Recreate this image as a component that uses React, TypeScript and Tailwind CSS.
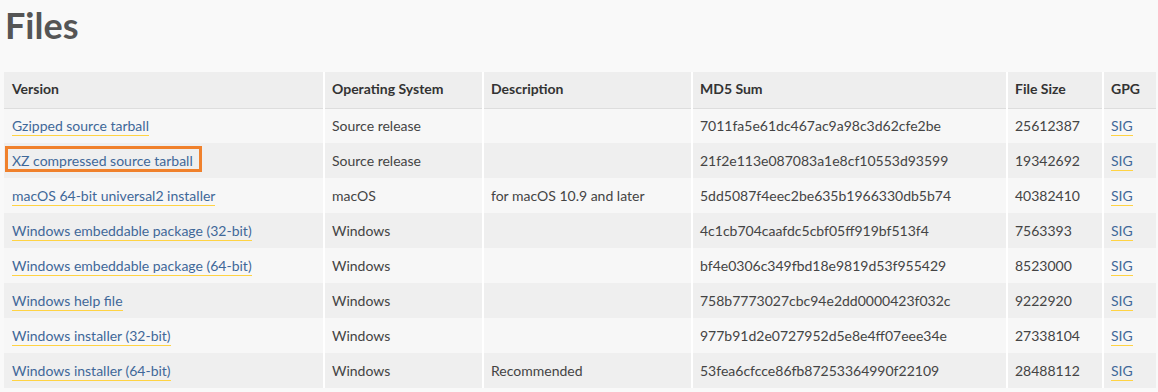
import React from "react";

type FileRow = {
  name: string;
  os: string;
  desc: string;
  md5: string;
  size: string;
  marked?: boolean;
};

const rows: FileRow[] = [
  { name: "Gzipped source tarball", os: "Source release", desc: "", md5: "7011fa5e61dc467ac9a98c3d62cfe2be", size: "25612387" },
  { name: "XZ compressed source tarball", os: "Source release", desc: "", md5: "21f2e113e087083a1e8cf10553d93599", size: "19342692", marked: true },
  { name: "macOS 64-bit universal2 installer", os: "macOS", desc: "for macOS 10.9 and later", md5: "5dd5087f4eec2be635b1966330db5b74", size: "40382410" },
  { name: "Windows embeddable package (32-bit)", os: "Windows", desc: "", md5: "4c1cb704caafdc5cbf05ff919bf513f4", size: "7563393" },
  { name: "Windows embeddable package (64-bit)", os: "Windows", desc: "", md5: "bf4e0306c349fbd18e9819d53f955429", size: "8523000" },
  { name: "Windows help file", os: "Windows", desc: "", md5: "758b7773027cbc94e2dd0000423f032c", size: "9222920" },
  { name: "Windows installer (32-bit)", os: "Windows", desc: "", md5: "977b91d2e0727952d5e8e4ff07eee34e", size: "27338104" },
  { name: "Windows installer (64-bit)", os: "Windows", desc: "Recommended", md5: "53fea6cfcce86fb87253364990f22109", size: "28488112" },
];

const headers = ["Version", "Operating System", "Description", "MD5 Sum", "File Size", "GPG"];

function Link({ children }: { children: React.ReactNode }) {
  return (
    <a className="inline-block leading-[18px] border-b border-[#ffd343] text-[#3f6899]">{children}</a>
  );
}

export default function App() {
  return (
    <div
      className="min-h-[392px] w-[1158px] bg-[#f9f9f9] text-[#444444]"
      style={{ fontFamily: "Lato, 'Open Sans', sans-serif" }}
    >
      <h1 className="pl-[5px] pt-[5px] text-[36px] font-bold leading-[40px] text-[#555555]">Files</h1>
      <div className="pl-[4px] pt-[27px]">
        <table className="w-[1152px] table-fixed border-collapse text-[14px]">
          <colgroup>
            <col className="w-[320px]" />
            <col className="w-[159px]" />
            <col className="w-[209px]" />
            <col className="w-[315px]" />
            <col className="w-[96px]" />
            <col className="w-[53px]" />
          </colgroup>
          <thead>
            <tr className="h-[36px] bg-[#eeeeee]">
              {headers.map((h, i) => (
                <th
                  key={h}
                  className={`border-b border-b-[#dddddd] pb-[2px] text-left font-bold text-[#333333] ${
                    i === 0 ? "pl-[8px]" : "border-l-2 border-l-white pl-[7px]"
                  }`}
                >
                  {h}
                </th>
              ))}
            </tr>
          </thead>
          <tbody>
            {rows.map((r, idx) => (
              <tr key={r.name} className={`h-[35px] ${idx % 2 === 0 ? "bg-[#f7f7f7]" : "bg-[#efefef]"}`}>
                <td className="pl-[8px]">
                  {r.marked ? (
                    <span className="relative inline-block">
                      <Link>{r.name}</Link>
                      <span className="absolute -left-[7px] -right-[9px] -top-[4px] -bottom-[1px] border-[3px] border-[#f0812c]" />
                    </span>
                  ) : (
                    <Link>{r.name}</Link>
                  )}
                </td>
                <td className="border-l-2 border-l-white pl-[7px]">{r.os}</td>
                <td className="border-l-2 border-l-white pl-[7px]">{r.desc}</td>
                <td className="border-l-2 border-l-white pl-[7px]">{r.md5}</td>
                <td className="border-l-2 border-l-white pl-[7px]">{r.size}</td>
                <td className="border-l-2 border-l-white pl-[7px]">
                  <Link>SIG</Link>
                </td>
              </tr>
            ))}
          </tbody>
        </table>
      </div>
    </div>
  );
}
